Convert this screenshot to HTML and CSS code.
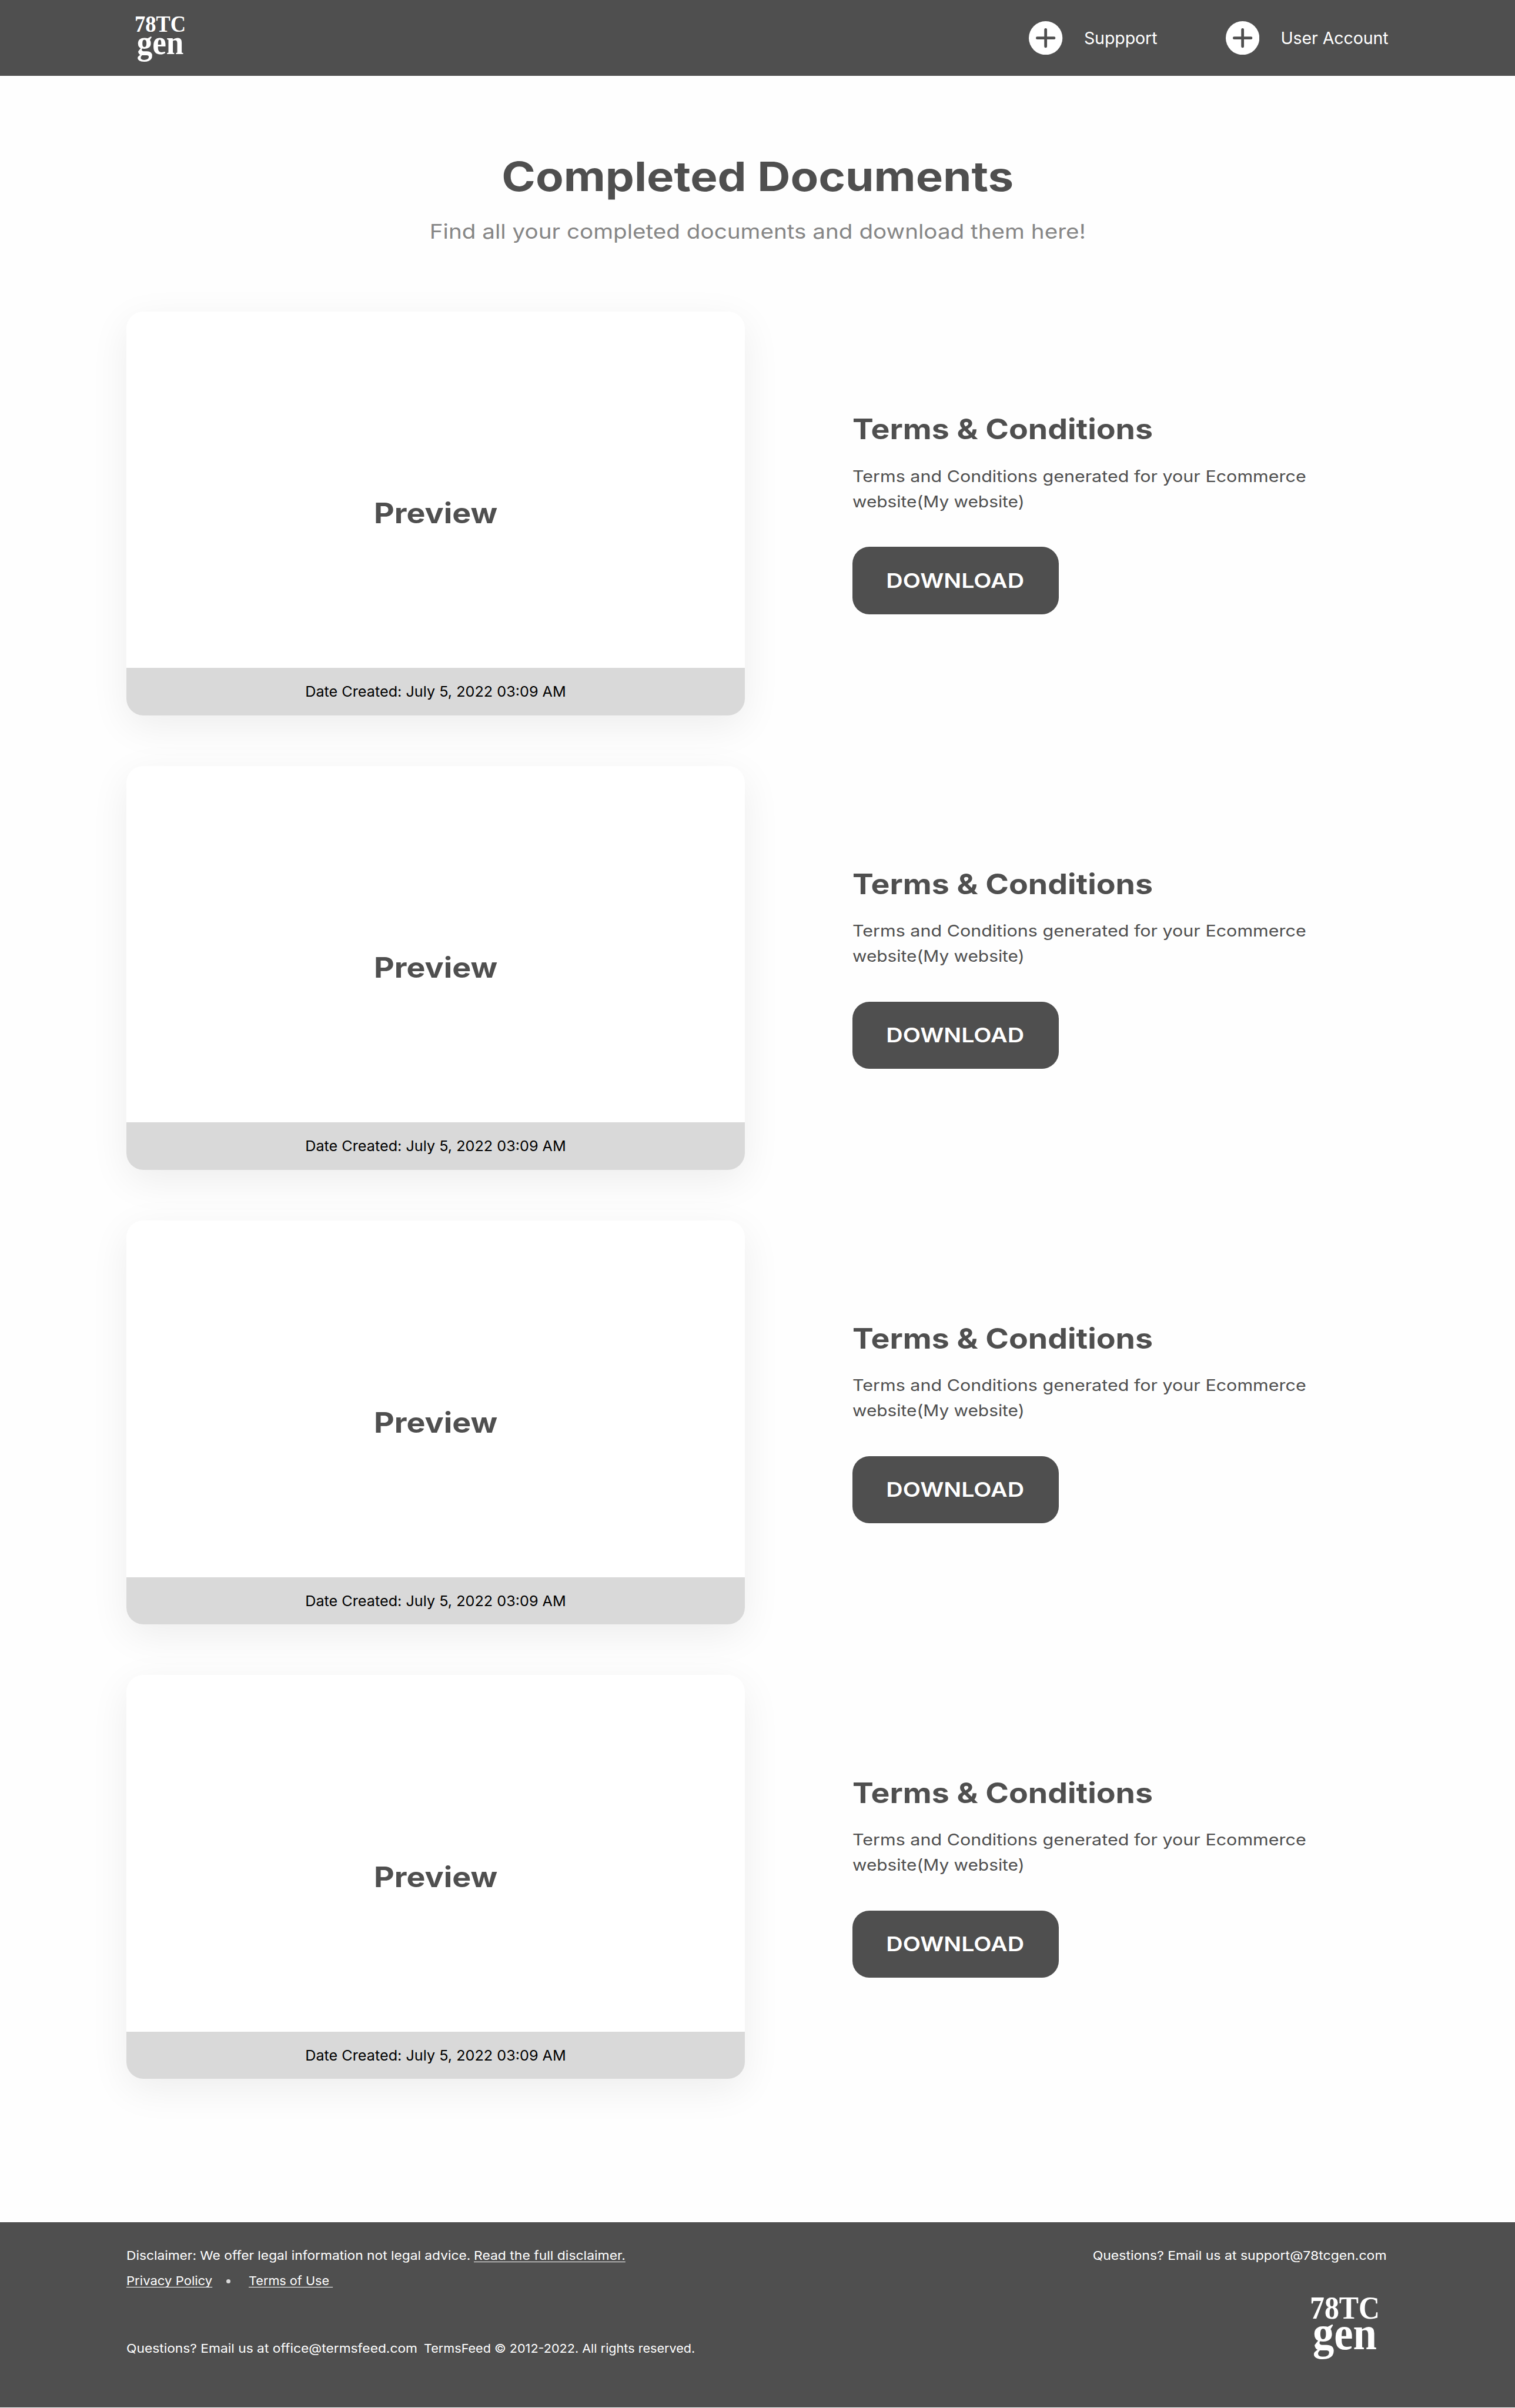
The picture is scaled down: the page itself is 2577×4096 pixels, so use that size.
FILE: index.html
```html
<!DOCTYPE html>
<html lang="en">
<head>
<meta charset="utf-8">
<title>Completed Documents</title>
<link rel="stylesheet" href="styles.css">
</head>
<body>
<header class="topbar">
  <svg class="logo logo-small" viewBox="0 0 119 104" role="img" aria-label="78TC gen">
    <text class="logo-top" x="0" y="37" textLength="119" lengthAdjust="spacingAndGlyphs">78TC</text>
    <text class="logo-bottom" x="5" y="88.6" textLength="109" lengthAdjust="spacingAndGlyphs">gen</text>
  </svg>
  <nav class="nav">
    <a class="nav-item">
      <svg class="plus" viewBox="0 0 32 32"><circle cx="16" cy="16" r="16"/><path d="M16 8v16M8 16h16"/></svg>
      <span>Suppport</span>
    </a>
    <a class="nav-item">
      <svg class="plus" viewBox="0 0 32 32"><circle cx="16" cy="16" r="16"/><path d="M16 8v16M8 16h16"/></svg>
      <span>User Account</span>
    </a>
  </nav>
</header>
<main class="main">
  <h1 class="title">Completed Documents</h1>
  <p class="subtitle">Find all your completed documents and download them here!</p>
  <div class="documents">
    <section class="document">
      <div class="card"><div class="preview">Preview</div><div class="date"><span>Date Created: July 5, 2022 03:09 AM</span></div></div>
      <div class="info">
        <h2 class="name">Terms &amp; Conditions</h2>
        <p class="desc"><span class="desc-line">Terms and Conditions generated for your Ecommerce</span> <span class="desc-line desc-site">website(My website)</span></p>
        <button class="download"><span>DOWNLOAD</span></button>
      </div>
    </section>
    <section class="document">
      <div class="card"><div class="preview">Preview</div><div class="date"><span>Date Created: July 5, 2022 03:09 AM</span></div></div>
      <div class="info">
        <h2 class="name">Terms &amp; Conditions</h2>
        <p class="desc"><span class="desc-line">Terms and Conditions generated for your Ecommerce</span> <span class="desc-line desc-site">website(My website)</span></p>
        <button class="download"><span>DOWNLOAD</span></button>
      </div>
    </section>
    <section class="document">
      <div class="card"><div class="preview">Preview</div><div class="date"><span>Date Created: July 5, 2022 03:09 AM</span></div></div>
      <div class="info">
        <h2 class="name">Terms &amp; Conditions</h2>
        <p class="desc"><span class="desc-line">Terms and Conditions generated for your Ecommerce</span> <span class="desc-line desc-site">website(My website)</span></p>
        <button class="download"><span>DOWNLOAD</span></button>
      </div>
    </section>
    <section class="document">
      <div class="card"><div class="preview">Preview</div><div class="date"><span>Date Created: July 5, 2022 03:09 AM</span></div></div>
      <div class="info">
        <h2 class="name">Terms &amp; Conditions</h2>
        <p class="desc"><span class="desc-line">Terms and Conditions generated for your Ecommerce</span> <span class="desc-line desc-site">website(My website)</span></p>
        <button class="download"><span>DOWNLOAD</span></button>
      </div>
    </section>
  </div>
</main>
<footer class="footer">
  <div class="footer-left">
    <div class="row"><span class="disclaimer">Disclaimer: We offer legal information not legal advice.</span><a class="link link-disclaimer">Read the full disclaimer.</a></div>
    <div class="row policies"><a class="link link-privacy">Privacy Policy</a><i class="dot"></i><a class="link link-terms">Terms of Use </a></div>
    <div class="row legal"><span class="office">Questions? Email us at office@termsfeed.com</span><span class="rights">TermsFeed © 2012-2022. All rights reserved.</span></div>
  </div>
  <div class="footer-right">
    <div class="support">Questions? Email us at support@78tcgen.com</div>
    <svg class="logo logo-large" viewBox="0 0 119 104" role="img" aria-label="78TC gen">
      <text class="logo-top" x="0" y="37" textLength="119" lengthAdjust="spacingAndGlyphs">78TC</text>
      <text class="logo-bottom" x="5" y="88.6" textLength="109" lengthAdjust="spacingAndGlyphs">gen</text>
    </svg>
  </div>
</footer>
</body>
</html>
```
FILE: styles.css
```css
* { box-sizing: border-box; margin: 0; padding: 0; }

body {
  width: 2577px;
  min-height: 4096px;
  background: #fefefe;
  color: #4f4f4f;
  font-family: Inter, "Liberation Sans", sans-serif;
}

/* Header */
.topbar {
  display: flex;
  justify-content: space-between;
  align-items: flex-start;
  height: 129px;
  padding: 27px 215.5px 0 228.5px;
  background: #4f4f4f;
  color: #fff;
}
.logo { display: block; overflow: visible; fill: #fff; font-family: "Liberation Serif", "Times New Roman", serif; font-weight: 700; }
.logo-top { font-size: 55px; }
.logo-bottom { font-size: 81px; }
.logo-small { width: 87px; height: 76px; }
.logo-large { width: 119px; height: 104px; }

.nav { display: flex; gap: 116.5px; padding-top: 8.8px; }
.nav-item { display: flex; align-items: center; gap: 36.2px; font-size: 28.6px; line-height: 57.2px; letter-spacing: -0.12px; white-space: nowrap; }
.plus { width: 57.3px; height: 57.3px; fill: #fff; }
.plus path { stroke: #4f4f4f; stroke-width: 2.67; stroke-linecap: round; }

/* Page heading; the type is set wide throughout with scaleX */
.main { height: 3650.6px; padding: 127px 214.75px 0; }
.title { font-size: 68.9px; line-height: 88px; font-weight: 700; text-align: center; transform: scaleX(1.131); }
.subtitle { margin-top: 27.5px; font-size: 34.5px; line-height: 44px; text-align: center; color: #868686; transform: scaleX(1.12); }

/* Document rows */
.documents { display: grid; gap: 85.9px; margin-top: 114.2px; }
.document { display: grid; grid-template-columns: 1052.2px 1fr; column-gap: 182.6px; height: 687.2px; }
.card {
  display: flex;
  flex-direction: column;
  overflow: hidden;
  border-radius: 28.6px;
  background: #fff;
  box-shadow: 0 18px 66px rgba(0, 0, 0, 0.07);
}
.preview { flex: 1; padding-top: 313.7px; font-size: 48.2px; line-height: 60px; font-weight: 700; text-align: center; transform: scaleX(1.115); }
.date { height: 80.5px; font-size: 24.1px; line-height: 82.5px; text-align: center; color: #000; background: #d9d9d9; }
.date span { display: inline-block; transform: scaleX(1.046); }

.info { display: flex; flex-direction: column; align-items: flex-start; padding-top: 170.8px; white-space: nowrap; }
.name { font-size: 48.2px; line-height: 60px; font-weight: 700; transform: scaleX(1.113); transform-origin: left; }
.desc { margin-top: 28.5px; font-size: 27.6px; line-height: 42.9px; }
.desc-line { display: block; transform: scaleX(1.104); transform-origin: left; }
.desc-site { transform: scaleX(1.0816); }
.download {
  width: 351px;
  height: 114.5px;
  margin-top: 55.7px;
  border: 0;
  border-radius: 28.6px;
  background: #4f4f4f;
  color: #fff;
  font: 600 34.4px/114px Inter, "Liberation Sans", sans-serif;
}
.download span { display: inline-block; transform: scaleX(1.144); }

/* Footer */
.footer {
  display: flex;
  justify-content: space-between;
  height: 315px;
  padding: 43px 214.75px 0;
  background: #4f4f4f;
  color: #fff;
  font-size: 20.7px;
  line-height: 28px;
}
.row { display: flex; align-items: center; white-space: pre; }
.row span, .link { transform-origin: left; }
.policies { margin-top: 15.2px; }
.legal { margin-top: 87.2px; }
.link { text-decoration: underline; text-decoration-thickness: 1.3px; text-underline-offset: 2.5px; text-decoration-skip-ink: none; }
.disclaimer { width: 591px; transform: scaleX(1.099); }
.link-disclaimer { transform: scaleX(1.108); }
.link-privacy { width: 146.5px; transform: scaleX(1.068); }
.link-terms { transform: scaleX(1.046); }
.dot { width: 7.2px; height: 7.2px; margin: 2px 31px 0 23.5px; border-radius: 50%; background: #d9d9d9; }
.office { width: 506.5px; transform: scaleX(1.101); }
.rights { transform: scaleX(1.044); }
.footer-right { display: flex; flex-direction: column; align-items: flex-end; }
.support { margin-right: 3.5px; white-space: nowrap; transform: scaleX(1.112); transform-origin: right; }
.logo-large { margin: 56.5px 15.5px 0 0; }
```
